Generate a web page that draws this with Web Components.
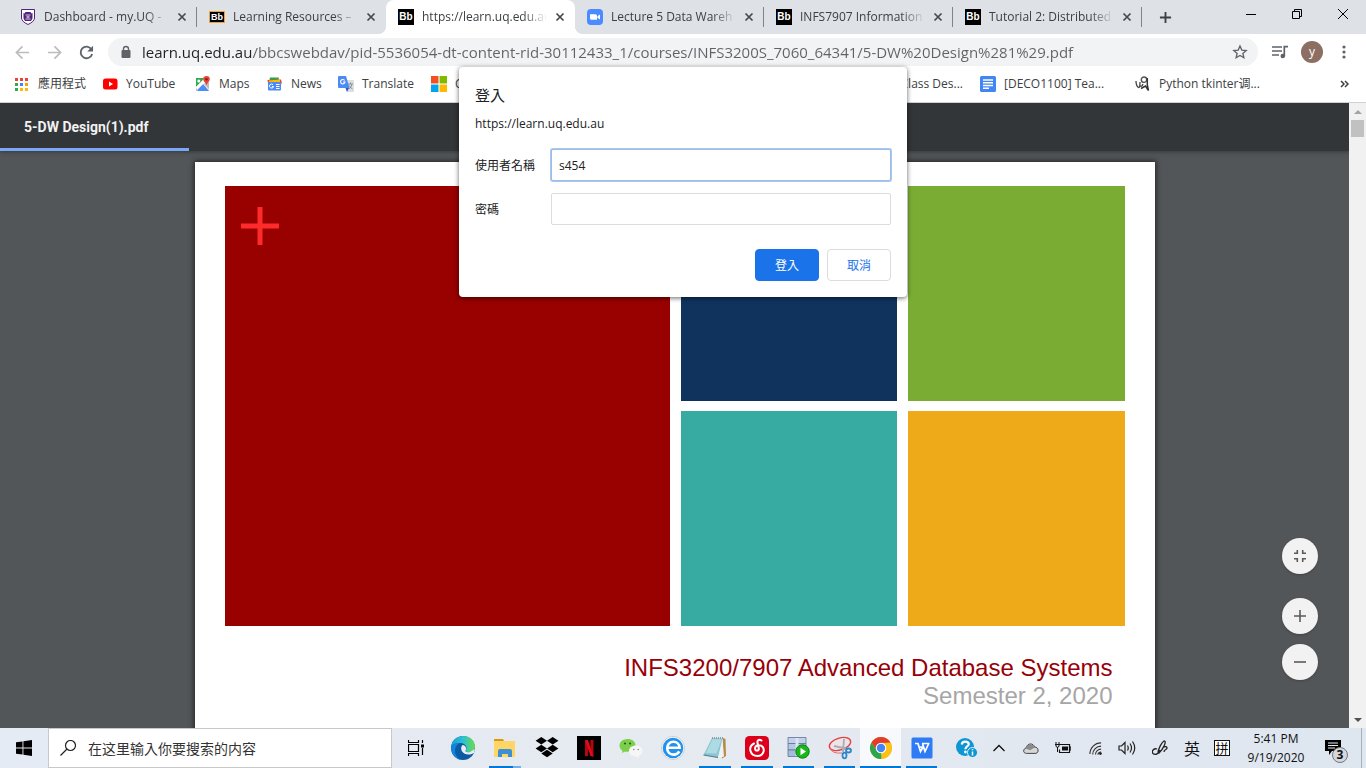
<!DOCTYPE html>
<html lang="zh-Hant">
<head>
<meta charset="utf-8">
<title>5-DW Design(1).pdf</title>
<style>
  html, body { height: 100%; }
  body { margin: 0; overflow: hidden; font: 12px/16px "Open Sans", "Noto Sans CJK TC", sans-serif; color: #3c4043; }
</style>
</head>
<body>
<desktop-screen></desktop-screen>
<script>
const ICONS = {
  crest: ['0 0 16 16', '<path d="M1.500 .5h13v8.500q0 3.500-6.500 6.500Q1.500 12.500 1.500 9z" fill="#fff" stroke="#51247a"/><path d="M3.500 4l1 .5 1-1.500h5l1 1.500 1-.5v5.500L11 12H5l-1.500-2.500z" fill="#51247a"/><path d="M5.500 6h5M5.500 10h5" stroke="#d8cce4"/><path d="M6.500 7h3v2h-3z" fill="#b79fce"/>'],
  lock: ['0 0 12 14', '<rect x="1.500" y="5" width="9" height="8" rx="1" fill="#5f6368"/><path d="M3.500 5.500V4a2.500 2.500 0 0 1 5 0v1.500" fill="none" stroke="#5f6368" stroke-width="1.400"/>'],
  close: ['0 0 10 10', '<path d="M1.500 1.500l7 7M8.500 1.500l-7 7" stroke="#45494d" stroke-width="1.700"/>'],
  plus: ['0 0 14 14', '<path d="M7 1v12M1 7h12" stroke="#3c4043" stroke-width="2"/>'],
  min: ['0 0 12 12', '<path d="M1 6.500h10" stroke="#000"/>'],
  restore: ['0 0 12 12', '<path d="M1.500 3.500h7v7h-7zM3.500 3.500v-2h7v7h-2" fill="none" stroke="#000"/>'],
  exit: ['0 0 12 12', '<path d="M1 1l10 10M11 1L1 11" stroke="#000"/>'],
  back: ['0 0 16 16', '<path d="M15 8H2M8 1.500L1.500 8 8 14.500" fill="none" stroke="#babcbe" stroke-width="1.800"/>'],
  forward: ['0 0 16 16', '<path d="M1 8h13M8 1.500L14.500 8 8 14.500" fill="none" stroke="#babcbe" stroke-width="1.800"/>'],
  reload: ['0 0 16 16', '<path d="M13.200 4.500A6.200 6.200 0 1 0 14 9.500" fill="none" stroke="#5f6368" stroke-width="2"/><path d="M15 .8V7H8.800z" fill="#5f6368"/>'],
  star: ['0 0 24 24', '<path d="M12 3l2.700 6.100 6.600.6-5 4.400 1.500 6.500L12 17.200l-5.800 3.400 1.500-6.500-5-4.400 6.600-.6z" fill="none" stroke="#5f6368" stroke-width="2"/>'],
  music: ['0 0 16 14', '<path d="M0 2h10M0 6h10M0 10h7" stroke="#5f6368" stroke-width="1.700"/><path d="M12.300 11V1.700H16" fill="none" stroke="#5f6368" stroke-width="1.700"/><circle cx="10.800" cy="11" r="2.300" fill="#5f6368"/>'],
  dots: ['0 0 4 14', '<g fill="#5f6368"><circle cx="2" cy="2" r="1.600"/><circle cx="2" cy="7" r="1.600"/><circle cx="2" cy="12" r="1.600"/></g>'],
  apps: ['-1 0 16 13', '<path d="M0 0h3v3H0zM5 0h3v3H5zM10 0h3v3h-3z" fill="#ea4335"/><path d="M0 5h3v3H0z" fill="#34a853"/><path d="M5 5h3v3H5z" fill="#4285f4"/><path d="M10 5h3v3h-3z" fill="#fb9f0b"/><path d="M0 10h3v3H0z" fill="#34a853"/><path d="M5 10h3v3H5zM10 10h3v3h-3z" fill="#fbbc05"/>'],
  youtube: ['0 0 16 16', '<rect x="1" y="2.500" width="14.500" height="11" rx="2.500" fill="#f00"/><path d="M7 5.500v5L11 8z" fill="#fff"/>'],
  maps: ['0 0 16 16', '<path d="M1 2h13v13H1z" fill="#e8e8e8"/><path d="M1 2h9L1 11z" fill="#34a853"/><path d="M1 15l7-7 6 7z" fill="#4c8df6"/><path d="M1 11l9-9 2 2L2 14z" fill="#fff"/><path d="M1 12l2 3H1zM9 8l5 5V6z" fill="#bdbdbd"/><path d="M11.500 0a3.300 3.300 0 0 1 3.300 3.300c0 2-2.400 3.200-3.300 6-.9-2.800-3.300-4-3.300-6A3.300 3.300 0 0 1 11.500 0z" fill="#e94335"/><circle cx="11.500" cy="3.200" r="1.200" fill="#8b1a13"/><circle cx="3.800" cy="5" r="1.500" fill="#fff"/>'],
  news: ['0 0 16 16', '<path d="M3 1.500h9l-1 5H2z" fill="#2fa24c"/><path d="M.5 4L14 3.500l1 4H1z" fill="#e94335"/><path d="M2 4.500l11-1v4H2z" fill="#fbbc05"/><rect x="1" y="6" width="13" height="8.500" rx="1" fill="#4c8bf5"/><path d="M6 8.700A2 2 0 1 0 6.500 10.500H5M9 8.500h3.500M9 10.500h3.500M9 12.500h3.500" fill="none" stroke="#fff"/>'],
  translate: ['0 0 16 16', '<path d="M6 4h9a1 1 0 0 1 1 1v10a1 1 0 0 1-1 1H9z" fill="#dedede"/><path d="M1 0h7l3.500 12H1a1 1 0 0 1-1-1V1a1 1 0 0 1 1-1z" fill="#4c8bf5"/><path d="M11 12l-2 4-1.500-4z" fill="#2a56c6"/><path d="M6.700 4.500A2.200 2.200 0 1 0 7 6H5" fill="none" stroke="#fff" stroke-width="1.100"/><path d="M10 8h5M12.500 6.500V8M14 8q-.5 3-3 5M11.500 9.500q1 2.500 3 3.500" fill="none" stroke="#7b8a99" stroke-width=".9"/>'],
  windows4: ['0 0 15 15', '<path d="M0 0h7v7H0z" fill="#f25022"/><path d="M8 0h7v7H8z" fill="#7fba00"/><path d="M0 8h7v7H0z" fill="#00a4ef"/><path d="M8 8h7v7H8z" fill="#ffb900"/>'],
  docs: ['0 0 16 16', '<rect width="16" height="16" rx="1.500" fill="#4285f4"/><path d="M3 4h10M3 6.800h10M3 9.500h10M3 12.300h6" stroke="#fff" stroke-width="1.400"/>'],
  script: ['0 0 16 16', '<path d="M1 5q0 5 2.500 6.500Q5 12 5 6M5 10q2 1 3-2" fill="none" stroke="#444" stroke-width="1.300"/><circle cx="9" cy="3.700" r="2.700" fill="none" stroke="#555" stroke-width="1.400"/><path d="M12.300 2v7l1.200 5.500L10.500 10 6 12.500" fill="none" stroke="#333" stroke-width="1.500"/>'],
  zoomcam: ['0 0 16 16', '<rect width="16" height="16" rx="4" fill="#4a8cff"/><path d="M3 5.200h5.500a1.500 1.500 0 0 1 1.500 1.500v4.100H4.500A1.500 1.500 0 0 1 3 9.300zM10.500 7.300L13 5.500v5l-2.500-1.800z" fill="#fff"/>'],
  fit: ['0 0 12 12', '<path d="M0 3.300h3.300V0M8.700 0v3.300H12M0 8.700h3.300V12M8.700 12V8.700H12" fill="none" stroke="#5a5a5a" stroke-width="1.600"/>'],
  zin: ['0 0 12 12', '<path d="M6 0v12M0 6h12" stroke="#5a5a5a" stroke-width="1.600"/>'],
  zout: ['0 0 12 12', '<path d="M0 6h12" stroke="#5a5a5a" stroke-width="1.600"/>'],
  up: ['0 0 8 4', '<path d="M0 4l4-4 4 4z" fill="#a3a3a3"/>'],
  down: ['0 0 8 4', '<path d="M0 0l4 4 4-4z" fill="#505050"/>'],
  cross: ['0 0 38 38', '<path d="M19 0v38M0 19h38" stroke="#ff2a2a" stroke-width="5"/>'],
  start: ['0 0 16 16', '<path d="M0 2.300L6.500 1.400v6.100H0zM7.400 1.300L16 0v7.500H7.400zM0 8.400h6.500v6.200L0 13.700zM7.400 8.400H16V16l-8.600-1.300z" fill="#000"/>'],
  search: ['0 0 16 16', '<circle cx="10.500" cy="5.500" r="5" fill="none" stroke="#222" stroke-width="1.200"/><path d="M7 9L.5 15.500" stroke="#222" stroke-width="1.300"/>'],
  taskview: ['0 0 16 16', '<path d="M.5 0v2.500h10V0M.5 16v-2.500h10V16M.5 4.500h10v7H.5zM14.500 0v3M14.500 8v7" fill="none" stroke="#000" stroke-width="1.200"/><path d="M13 4.500h3v3h-3z" fill="#000"/>'],
  edge: ['0 0 24 24', '<defs><linearGradient id="a" x1="0" x2="1"><stop stop-color="#1b9de2"/><stop offset=".5" stop-color="#2fc1cf"/><stop offset="1" stop-color="#6bdc4b"/></linearGradient></defs><circle cx="12" cy="12" r="12" fill="#0c59a4"/><path d="M.3 10C1.500 4 6.500 0 12.300 0 19 0 24 5 24 10.500c0 3.500-2.500 5.800-5.800 5.800-2.500 0-4-1-3.700-1.800.3-.6 1-1.200 1-2.600 0-2.800-2.800-5-6.200-5C5 6.900 1.500 8.500.3 10z" fill="url(#a)"/><path d="M.2 10C2 7.700 5.500 6.700 8.700 7 6 8.200 4 11.500 4 15c0 4 3 7.800 6.500 8.900C5 23.500-.8 18 .2 10z" fill="#0f86dc"/><path d="M11.500 9c-3 3-1 9.500 6 9.500 2.500 0 4.300-.6 5.500-1.500l1-4-5 3c-3 .7-5-.3-4.500-1.500 1.500-2 .5-5-3-5.500z" fill="#e7edf5"/>'],
  folder: ['0 0 24 24', '<path d="M1 3h9l1 2h10v3H1z" fill="#d9960f"/><path d="M1 5h21v15a1 1 0 0 1-1 1H2a1 1 0 0 1-1-1z" fill="#ffd565"/><path d="M5 21v-6q0-2 2-2h10q2 0 2 2v6h-4v-3H9v3z" fill="#3d91d3"/>'],
  dropbox: ['0 0 24 22', '<path d="M6.300 0l5.700 3.800-5.700 3.700L.6 3.800zM17.700 0l5.700 3.800-5.700 3.700L12 3.800zM6.300 7.700l5.700 3.700-5.700 3.800-5.700-3.800zM17.700 7.700l5.700 3.700-5.700 3.800-5.700-3.800zM12 12.700l5.700 3.700-5.700 3.800-5.700-3.800z" fill="#000"/>'],
  netflix: ['0 0 24 24', '<path d="M0 0h24v24H0z" fill="#000"/><path d="M8 4h3v16l-3 .5zM13.500 4h3v16.500l-3-.5z" fill="#b20710"/><path d="M8 4h3l5.500 16.500-3-.5z" fill="#e50914"/>'],
  wechat: ['0 0 24 24', '<path d="M8.500 3C4 3 .5 5.800.5 9.500c0 2.200 1 4 3 5.200L3 17l3-1.500c5 1 10.500-1.500 10.500-6C16.500 5.500 13 3 8.500 3z" fill="#7bcf4a"/><path d="M17 9.500c-4 0-7 2.300-7 5.500s3 5.500 7 5.500l3 1.500-.5-2.200c2.500-.8 4-2.600 4-4.800 0-3.200-2.800-5.500-6.500-5.500z" fill="#f6f6f6"/><g fill="#2c5b1a"><circle cx="6" cy="7.500" r="1.100"/><circle cx="11" cy="7.500" r="1.100"/></g><g fill="#8a8a8a"><circle cx="14.800" cy="13.500" r=".8"/><circle cx="19.200" cy="13.500" r=".8"/></g>'],
  iebrowser: ['0 0 24 24', '<circle cx="12" cy="12" r="11.500" fill="#fff" stroke="#a9b4bf" stroke-width=".6"/><circle cx="12" cy="12" r="10.300" fill="#2492ec"/><path d="M6.500 11.800h12.200c-.3-3.800-3-6-6.300-6-3.700 0-6.200 2.800-6.200 6.500s2.700 6.300 6.300 6.300c2.600 0 4.600-1.200 5.800-3.300" fill="none" stroke="#fff" stroke-width="2.600"/>'],
  notepad: ['0 0 24 24', '<path d="M20 2l2.500 1 .5 17-4 2.500z" fill="#b98a45"/><path d="M9 2l11 .5-5 19L.5 19z" fill="#8cc5d4"/><path d="M9.500 3l9 .5-5 14L3 17z" fill="#acdbe4"/><path d="M19.500 3l1.500 17.500L15 22z" fill="#ecf2f5"/><path d="M.5 19l14.500 2.500" stroke="#4d7a88" stroke-width="1.200"/><path d="M9 2h11" stroke="#808a91" stroke-width="1.500" stroke-dasharray="1 1"/>'],
  netease: ['0 0 24 24', '<rect width="24" height="24" rx="4.500" fill="#dd001b"/><path d="M16.500 4.500c-2.500-1.500-4.500 0-4 2.200l1.300 5.800c.5 2.500-3.800 3-3.800 0 0-3 3.500-4 6-2.800 4.500 2.300 3.500 9.800-3.500 10.300-7.500 0-10-9-3.500-12.500" fill="none" stroke="#fff" stroke-width="2" stroke-linecap="round"/>'],
  server: ['0 0 24 24', '<g stroke="#5f7499" stroke-width=".8"><path d="M1 1.500h18v6H1z" fill="#c3d2e8"/><path d="M1 7.500h18v6.500H1z" fill="#b5c8e2"/><path d="M1 14h18v6.500H1z" fill="#a4bcdb"/></g><path d="M10 2v18" stroke="#dce6f4" stroke-width="3"/><circle cx="15.500" cy="15.500" r="6.700" fill="#17b81a" stroke="#0c8110"/><path d="M13.500 11.700v7.600l5.500-3.800z" fill="#fff"/>'],
  snip: ['0 0 24 24', '<ellipse cx="12" cy="8" rx="11" ry="6" fill="#f8dede" fill-opacity=".5" stroke="#e33d3d" stroke-width="1.300" transform="rotate(-17 12 8)"/><path d="M2 12q2 6 12 5" fill="none" stroke="#e46969"/><path d="M6 10l14 3M16 3l-1 13" stroke="#a7adb5" stroke-width="1.800"/><g fill="none" stroke="#2f86c9" stroke-width="1.800"><ellipse cx="20.500" cy="14.500" rx="2.500" ry="2"/><ellipse cx="16.500" cy="19.500" rx="2" ry="2.800"/></g>'],
  chrome: ['0 0 24 24', '<circle cx="12" cy="12" r="11" fill="#fbc116"/><path d="M2.500 6.500A11 11 0 0 1 21.500 6.500L12 7 7.700 14.500z" fill="#e33b2e"/><path d="M2.500 6.500l5.200 8L12 17l.5 6A11 11 0 0 1 2.500 6.500z" fill="#2da44e"/><path d="M12 7h9.800A11 11 0 0 1 12 23l4.500-8.500z" fill="#fbc116"/><circle cx="12" cy="12" r="5.300" fill="#fff"/><circle cx="12" cy="12" r="4.200" fill="#4285f4"/>'],
  wps: ['0 0 24 24', '<rect x="1.500" y="1.500" width="21" height="21" rx="1.500" fill="#2f7bf5"/><path d="M5 7.500h3l2.500 8L13 11h-3M12 7.500h7.500M18.500 8L15 15.500l-2.500-8" fill="none" stroke="#fff" stroke-width="1.700"/>'],
  help: ['0 0 22 20', '<circle cx="9" cy="9" r="9" fill="#0d96d4"/><path d="M5.700 6.500c.5-4 7-3.500 7-.3 0 2.300-3.300 2.300-3.300 5" fill="none" stroke="#fff" stroke-width="2.200"/><circle cx="9.400" cy="14" r="1.400" fill="#fff"/><circle cx="16.500" cy="14.500" r="5" fill="#0d96d4" stroke="#e6eef7"/><path d="M16.500 13.500v4M16.500 11v1.300" stroke="#fff" stroke-width="1.500"/>'],
  chevron: ['0 0 12 8', '<path d="M.5 7L6 1.500 11.500 7" fill="none" stroke="#111" stroke-width="1.300"/>'],
  cloud: ['0 0 18 12', '<path d="M4 11.500c-4.500 0-4-5.500-.5-6C4.500-.5 12-.5 13 4.500c4.500-.5 5.500 6 1.500 7z" fill="#d6d6d6" stroke="#333"/><path d="M3 6c2-7 9-5.500 10-1L8 8z" fill="#8b8b8b"/>'],
  battery: ['0 0 16 12', '<path d="M5 2.500h9.500v8H4.500v-3M15 5h1v3h-1" fill="none" stroke="#111" stroke-width="1.200"/><path d="M7 4.500h6v4H7z" fill="#111"/><path d="M1 0v2.500M4 0v2.500M0 2.500h5M1 3v1.500q1.500 1.500 3 0V3M2.500 5v5" fill="none" stroke="#111"/>'],
  wifi: ['0 0 14 14', '<g fill="none" stroke="#333" stroke-width="1.200"><path d="M1 13A12 12 0 0 1 13 1"/><path d="M4 13.500A9 9 0 0 1 13 4.500" /><path d="M7 13.500A6 6 0 0 1 13 7.700"/><path d="M9.500 13.500A3.500 3.500 0 0 1 13 10.700"/></g><circle cx="12.300" cy="12.500" r="1.500" fill="#222"/>'],
  volume: ['0 0 18 14', '<path d="M1 5h2.500L7 1.500v11L3.500 9H1zM9.500 4.500q1.500 2.500 0 5M12 2.500q3 4.500 0 9M14.500 .5q4.500 6.500 0 13" fill="none" stroke="#222" stroke-width="1.200"/>'],
  pen: ['0 0 16 16', '<path d="M5 9c-3-1-6 2-4 4.500 2.500 2 6 0 7-3.500M6 13c0-4 4-11 6-12 3-.5 0 7-5 12zM10 9c2-3 5-3 5-1s-3 1-3 4" fill="none" stroke="#222" stroke-width="1.300"/>'],
  notice: ['0 0 16 16', '<path d="M0 0h16v11H7l-3 4v-4H0z" fill="#000"/><path d="M3 3h10M3 5.500h10M3 8h7" stroke="#e6ebf3"/>'],
  more: ['0 0 9 8', '<path d="M1 1l3 3-3 3M5 1l3 3-3 3" fill="none" stroke="#3c4043" stroke-width="1.500"/>']
};

class Piece extends HTMLElement {
  connectedCallback() {
    if (this.shadowRoot) return;
    this.attachShadow({ mode: 'open' }).innerHTML =
      '<style>*{box-sizing:border-box}button{font:inherit;color:inherit;border:0;padding:0;background:none}a{color:inherit;text-decoration:none}</style>' + this.view();
  }
}
const define = (name, view) => customElements.define(name, class extends Piece { view() { return view(this); } });

define('ui-icon', el => {
  const [box, art] = ICONS[el.getAttribute('name')];
  const [, , w, h] = box.split(' ');
  const size = el.getAttribute('size') || w;
  return `<style>:host{display:block;flex:none}svg{display:block}</style>
  <svg viewBox="${box}" width="${size}" height="${Math.round(size * h / w)}" aria-hidden="true">${art}</svg>`;
});

define('bb-badge', () => `<style>
  :host{display:block;flex:none}
  span{display:block;width:16px;height:16px;background:#000;color:#fff;font:bold 10px/15px "Liberation Sans",sans-serif;text-align:center}
  :host([framed]) span{height:12px;border:1px solid #e8a33d;font-size:9px;line-height:10px}
  </style><span>Bb</span>`);

define('browser-tab', () => `<style>
  :host{display:flex;align-items:center;flex:0 1 189px;min-width:0;height:34px;padding:0 10px 0 12px;position:relative;border-radius:8px 8px 0 0}
  :host([active]){background:#fff}
  :host([active])::before,:host([active])::after{content:"";position:absolute;bottom:0;width:8px;height:8px}
  :host([active])::before{right:100%;background:radial-gradient(circle at 0 0,#dee1e6 8px,#fff 8px)}
  :host([active])::after{left:100%;background:radial-gradient(circle at 100% 0,#dee1e6 8px,#fff 8px)}
  :host([divided]){border-radius:0;background:linear-gradient(#808488,#808488) right center/1px 20px no-repeat}
  .label{flex:1;min-width:0;margin:0 8px;overflow:hidden;white-space:nowrap;-webkit-mask-image:linear-gradient(90deg,#000 calc(100% - 24px),transparent)}
  button{display:block}
  </style><slot name="icon"></slot><span class="label"><slot></slot></span><button aria-label="Close tab"><ui-icon name="close"></ui-icon></button>`);

define('tab-strip', () => `<style>
  :host{display:flex;background:#dee1e6;height:34px;padding-left:8px;flex:none}
  .new{width:46px;display:grid;place-items:center}
  .window{display:flex;margin-left:auto}
  .window button{width:46px;height:28px;display:grid;place-items:center}
  </style>
  <browser-tab divided><ui-icon slot="icon" name="crest"></ui-icon>Dashboard - my.UQ -</browser-tab>
  <browser-tab><bb-badge slot="icon" framed></bb-badge>Learning Resources –</browser-tab>
  <browser-tab active><bb-badge slot="icon"></bb-badge>https://learn.uq.edu.au</browser-tab>
  <browser-tab divided><ui-icon slot="icon" name="zoomcam"></ui-icon>Lecture 5 Data Wareh</browser-tab>
  <browser-tab divided><bb-badge slot="icon"></bb-badge>INFS7907 Information</browser-tab>
  <browser-tab divided><bb-badge slot="icon"></bb-badge>Tutorial 2: Distributed</browser-tab>
  <button class="new" aria-label="New tab"><ui-icon name="plus" size="13"></ui-icon></button>
  <div class="window"><button aria-label="Minimize"><ui-icon name="min"></ui-icon></button><button aria-label="Restore"><ui-icon name="restore"></ui-icon></button><button aria-label="Close"><ui-icon name="exit"></ui-icon></button></div>`);

define('address-bar', () => `<style>
  :host{display:flex;align-items:center;flex:none;height:36px;padding:0 6px;background:#fff}
  button{width:32px;height:32px;display:grid;place-items:center;flex:none}
  .omnibox{flex:1;display:flex;align-items:center;height:28px;margin:0 6px;padding-left:12px;border-radius:14px;background:#f1f3f4}
  .omnibox button{width:36px}
  input{flex:1;min-width:0;margin-left:10px;padding:0;border:0;outline:0;font:15px/20px "Open Sans",sans-serif;color:transparent;background:linear-gradient(90deg,#202124 109px,#5f6368 109px);-webkit-background-clip:text;background-clip:text}
  .face{width:22px;height:22px;border-radius:50%;background:#8d6e63;color:#fff;line-height:20px}
  .right{display:grid;grid-template-columns:32px 32px 32px;place-items:center}
  </style>
  <button aria-label="Back"><ui-icon name="back" size="15"></ui-icon></button><button aria-label="Forward"><ui-icon name="forward" size="15"></ui-icon></button><button aria-label="Reload"><ui-icon name="reload" size="15"></ui-icon></button>
  <div class="omnibox"><ui-icon name="lock"></ui-icon>
  <input aria-label="Address" value="learn.uq.edu.au/bbcswebdav/pid-5536054-dt-content-rid-30112433_1/courses/INFS3200S_7060_64341/5-DW%20Design%281%29.pdf">
  <button aria-label="Bookmark"><ui-icon name="star" size="16"></ui-icon></button></div>
  <div class="right"><button aria-label="Media"><ui-icon name="music"></ui-icon></button><button class="face" aria-label="Profile">y</button><button aria-label="Menu"><ui-icon name="dots"></ui-icon></button></div>`);

define('book-mark', () => `<style>
  :host{display:block;min-width:0}
  a{display:flex;align-items:center;gap:8px;white-space:nowrap}
  </style><a href="#"><slot name="icon"></slot><span><slot></slot></span></a>`);

define('bookmark-bar', () => `<style>
  :host{display:grid;grid-template-columns:88px 93px 72px 71px 93px 1fr auto 155px 197px 24px;align-items:center;flex:none;height:33px;padding:0 10px 4px 14px;background:#fff;border-bottom:1px solid #cfd1d4}
  book-mark:nth-of-type(7){margin-right:17px}
  button{display:grid;place-items:center;height:20px}
  </style>
  <book-mark><ui-icon slot="icon" name="apps"></ui-icon>應用程式</book-mark>
  <book-mark><ui-icon slot="icon" name="youtube"></ui-icon>YouTube</book-mark>
  <book-mark><ui-icon slot="icon" name="maps"></ui-icon>Maps</book-mark>
  <book-mark><ui-icon slot="icon" name="news"></ui-icon>News</book-mark>
  <book-mark><ui-icon slot="icon" name="translate"></ui-icon>Translate</book-mark>
  <book-mark><ui-icon slot="icon" name="windows4" size="16"></ui-icon>C</book-mark>
  <book-mark>Class Des...</book-mark>
  <book-mark><ui-icon slot="icon" name="docs"></ui-icon>[DECO1100] Tea...</book-mark>
  <book-mark><ui-icon slot="icon" name="script"></ui-icon>Python tkinter调...</book-mark>
  <button aria-label="More bookmarks"><ui-icon name="more"></ui-icon></button>`);

define('slide-page', () => `<style>
  :host{display:block;width:72%;min-width:640px;max-width:960px;margin:11px auto 0;padding:24px 30px;background:#fff;box-shadow:0 0 5px 1px #222}
  .tiles{display:grid;grid-template:215px 215px / 445fr 216fr 216fr;gap:10px 11px}
  .tiles div{background:var(--c)}
  .lead{grid-row:span 2;padding:21px 16px}
  p{margin:28px 12px 0 0;text-align:right;font:24px/28px "Liberation Sans",sans-serif;color:#980008}
  span{display:block;color:#a6a6a6}
  </style>
  <div class="tiles"><div class="lead" style="--c:#990000"><ui-icon name="cross"></ui-icon></div><div style="--c:#10335e"></div><div style="--c:#7aac34"></div><div style="--c:#37aba2"></div><div style="--c:#eeaa18"></div></div>
  <p>INFS3200/7907 Advanced Database Systems<span>Semester 2, 2020</span></p>`);

define('pdf-viewer', () => `<style>
  :host{display:flex;flex:1;min-height:0;background:#525659}
  main{flex:1;min-width:0;position:relative;overflow:hidden}
  header{height:48px;background:#323639;color:#f1f1f1;font:bold 14px/48px Roboto,sans-serif;padding-left:24px;box-shadow:0 1px 4px #35383b;position:relative}
  .bar{position:absolute;left:0;bottom:0;width:14%;height:3px;background:#7ba8f6}
  .zoom{position:absolute;right:31px;bottom:48px;display:grid;gap:10px}
  .zoom button{width:36px;height:36px;border-radius:50%;background:#f2f2f2;display:grid;place-items:center;box-shadow:0 1px 2px #444}
  .zoom button:first-child{margin-bottom:14px}
  .scroll{width:17px;background:#f1f1f1;display:flex;flex-direction:column;align-items:center;padding:7px 0 6px}
  .thumb{width:13px;height:17px;margin-top:6px;background:#c1c1c1}
  .scroll ui-icon:last-child{margin-top:auto}
  </style>
  <main><header>5-DW Design(1).pdf<div class="bar"></div></header><slide-page></slide-page>
  <div class="zoom"><button aria-label="Fit to page"><ui-icon name="fit"></ui-icon></button><button aria-label="Zoom in"><ui-icon name="zin"></ui-icon></button><button aria-label="Zoom out"><ui-icon name="zout"></ui-icon></button></div></main>
  <div class="scroll"><ui-icon name="up"></ui-icon><div class="thumb"></div><ui-icon name="down"></ui-icon></div>`);

define('login-dialog', () => `<style>
  :host{display:block;position:absolute;top:67px;left:50%;transform:translateX(-50%);width:448px;padding:16px;background:#fff;border-radius:4px;box-shadow:0 1px 5px rgba(0,0,0,.6);color:#202124}
  h1{margin:0;font:15px/24px "Noto Sans CJK TC",sans-serif}
  p{margin:8px 0 16px;line-height:18px}
  form{display:grid;grid-template-columns:76px 1fr;row-gap:12px;align-items:center}
  input{height:32px;width:100%;padding:0 7px;border:1px solid #dadce0;border-radius:2px;font:inherit;color:inherit;outline:0;background:#fff}
  label{padding-top:2px}
  #user{border-color:#9dbde6;box-shadow:0 0 0 1px #a9c8f0}
  footer{grid-column:span 2;display:flex;justify-content:flex-end;gap:8px;margin-top:12px}
  footer button{width:64px;height:32px;border:1px solid #dadce0;border-radius:4px;color:#1a73e8;padding-top:2px}
  footer .primary{background:#1a73e8;border-color:#1a73e8;color:#fff}
  </style>
  <h1>登入</h1><p>https://learn.uq.edu.au</p>
  <form><label for="user">使用者名稱</label><input id="user" value="s454"><label for="pass">密碼</label><input id="pass" type="password">
  <footer><button type="button" class="primary">登入</button><button type="button">取消</button></footer></form>`);

define('task-item', el => `<style>
  :host{display:block;flex:none;width:42px;height:40px;position:relative}
  :host([slim]){width:41px}
  button{width:100%;height:100%;display:grid;place-items:center}
  :host([current]){background:#f7f9fc}
  :host([open])::after{content:"";position:absolute;left:5px;right:5px;bottom:0;height:2px;background:#0078d7}
  :host([current])::after{left:0;right:0}
  :host([stacked])::after{background:linear-gradient(90deg,#0078d7 24px,#76b1e5 24px)}
  </style><button aria-label="${el.getAttribute('app')}"><ui-icon name="${el.getAttribute('app')}" size="24"></ui-icon></button>`);

define('task-bar', () => `<style>
  :host{display:flex;flex:none;height:40px;background:linear-gradient(90deg,#e4ebf4,#e6eaf1 50%,#dee6f0);color:#111}
  button{display:grid;place-items:center}
  .wide{width:48px;flex:none}
  .search{flex:0 1 344px;display:flex;align-items:center;gap:12px;background:#fff;border:1px solid #c8c8c8;padding-left:11px}
  input{flex:1;min-width:0;border:0;outline:0;padding:0;background:none;font:14px/20px "Noto Sans CJK SC",sans-serif;color:#222}
  input::placeholder{color:#333;opacity:1}
  .apps{display:flex;margin-left:2px}
  .tray{display:flex;margin-left:auto}
  .tray button{width:32px}
  .tray .lang{width:30px;font:16px/20px "Noto Sans CJK SC",sans-serif}
  .box{width:16px;height:16px;border:1px solid #111;background:#fff;font-size:13px;line-height:14px}
  .tray .clock{width:78px;line-height:19px;align-content:center}
  .tray .notice{width:46px;position:relative;padding-right:10px}
  .count{position:absolute;left:17px;top:19px;width:16px;height:16px;border:1px solid #777;border-radius:50%;background:#d4d8de;font-weight:bold;line-height:14px}
  .edge{width:5px;border-left:1px solid #a9afb7}
  .tray .pen{width:34px}
  </style>
  <button class="wide" aria-label="Start"><ui-icon name="start"></ui-icon></button>
  <div class="search"><ui-icon name="search"></ui-icon><input aria-label="Search" placeholder="在这里输入你要搜索的内容"></div>
  <button class="wide" aria-label="Task view"><ui-icon name="taskview"></ui-icon></button>
  <div class="apps"><task-item app="edge"></task-item><task-item app="folder" open stacked></task-item><task-item app="dropbox"></task-item><task-item app="netflix"></task-item><task-item app="wechat"></task-item><task-item app="iebrowser"></task-item><task-item app="notepad" open></task-item><task-item app="netease" open></task-item><task-item app="server" slim open></task-item><task-item app="snip" slim open></task-item><task-item app="chrome" slim open current></task-item><task-item app="wps" slim open></task-item></div>
  <div class="tray"><button aria-label="Help"><ui-icon name="help"></ui-icon></button><button aria-label="Hidden icons"><ui-icon name="chevron"></ui-icon></button><button aria-label="Cloud"><ui-icon name="cloud" size="16"></ui-icon></button><button aria-label="Battery"><ui-icon name="battery"></ui-icon></button><button aria-label="Network"><ui-icon name="wifi" size="13"></ui-icon></button><button aria-label="Volume"><ui-icon name="volume"></ui-icon></button><button class="pen" aria-label="Pen"><ui-icon name="pen"></ui-icon></button><button class="lang">英</button><button class="lang"><span class="box">拼</span></button>
  <button class="clock"><span>5:41 PM</span><span>9/19/2020</span></button><button class="notice" aria-label="Notifications"><ui-icon name="notice"></ui-icon><span class="count">3</span></button><span class="edge"></span></div>`);

define('desktop-screen', () => `<style>
  :host{display:flex;flex-direction:column;height:100vh;position:relative}
  </style><tab-strip></tab-strip><address-bar></address-bar><bookmark-bar></bookmark-bar><pdf-viewer></pdf-viewer><task-bar></task-bar><login-dialog></login-dialog>`);
</script>
</body>
</html>
